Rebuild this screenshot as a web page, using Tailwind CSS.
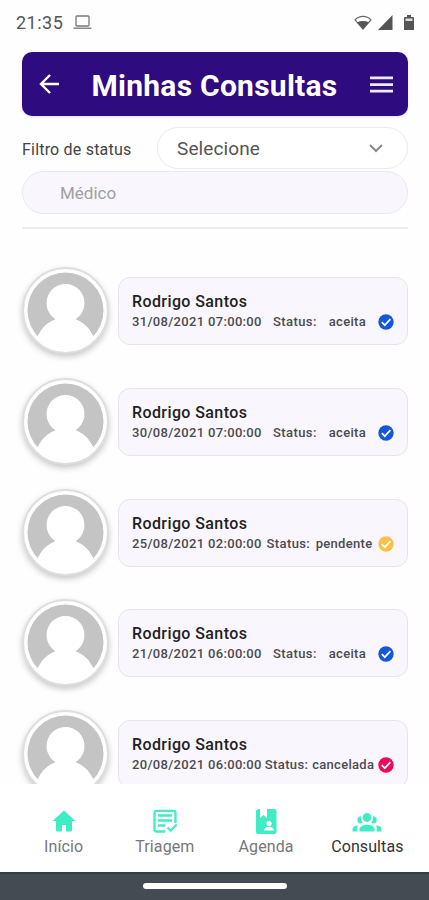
<!DOCTYPE html>
<html lang="pt-br">
<head>
  <meta charset="UTF-8" />
  <meta name="viewport" content="width=device-width, initial-scale=1.0" />
  <title>Minhas Consultas</title>
  <script src="https://cdn.jsdelivr.net/npm/@tailwindcss/browser@4"></script>
</head>
<body class="bg-white font-[Roboto,sans-serif]">
  <div class="w-[429px] h-[900px] flex flex-col overflow-hidden bg-[#fefefe]">

    <!-- Barra de status do sistema -->
    <div class="h-[52px] shrink-0 flex items-start justify-between pl-4 pr-[15px] pt-[11px] text-[#555]">
      <div class="flex items-center gap-[10px]">
        <span class="text-[18px] leading-[23px] tracking-[0.5px]">21:35</span>
        <svg class="w-[19px] h-[15px]" viewBox="0 0 19 15" fill="none" stroke="#777" stroke-width="1.3">
          <rect x="3" y="1" width="13" height="10" rx="1" />
          <path d="M0.5 13.2h18" />
        </svg>
      </div>
      <div class="flex items-center h-[22px] gap-[6px]">
        <svg class="w-[18px] h-[15px]" viewBox="0 0 18 15">
          <path d="M1 4.800C5.500 .2 12.500 .2 17 4.800L9 14z" fill="none" stroke="#666" stroke-width="1.200" />
          <path d="M3.200 7.300c3.500-1.600 8.100-1.600 11.600 0L9 14z" fill="#555" />
        </svg>
        <svg class="w-[15px] h-[15px]" viewBox="0 0 15 15" fill="#555"><path d="M0 15L14.500 0v15z" /></svg>
        <svg class="w-[10px] h-[15px] ml-[5px]" viewBox="0 0 10 15" fill="#555">
          <path d="M3 0h4v2h2a1 1 0 0 1 1 1v12H0V3a1 1 0 0 1 1-1h2z" />
          <path d="M1.500 3.500h7V6h-7z" fill="#ddd" />
        </svg>
      </div>
    </div>

    <!-- Cabeçalho -->
    <header class="ml-[22px] mr-[21px] h-[64px] shrink-0 rounded-[10px] bg-[#2f0b80] shadow-sm flex items-center justify-between pl-[17px] pr-[15px]">
      <svg class="w-5 h-5" viewBox="0 0 20 20" fill="none" stroke="white" stroke-width="2.400"><path d="M20 10H2M11 1L2 10l9 9" /></svg>
      <h1 class="text-white font-bold text-[30px] leading-[36px] tracking-[0.25px] whitespace-nowrap pt-[3px]">Minhas Consultas</h1>
      <svg class="w-[23px] h-[17px]" viewBox="0 0 23 17" fill="#efeaff"><path d="M0 .5h23v2.800H0zM0 7.200h23V10H0zM0 13.800h23v2.800H0z" /></svg>
    </header>

    <!-- Filtros -->
    <div class="ml-[22px] mr-[21px] mt-[11px] shrink-0">
      <div class="flex items-center justify-between">
        <label class="text-[16px] text-[#444] tracking-[0.2px] pt-[3px] whitespace-nowrap">Filtro de status</label>
        <div class="w-[251px] h-[42px] rounded-full border border-[#ebebeb] bg-white flex items-center justify-between pl-[19px] pr-6">
          <span class="text-[19px] text-[#555] tracking-[0.1px] pt-[3px]">Selecione</span>
          <svg class="w-[14px] h-[9px]" viewBox="0 0 14 9" fill="none" stroke="#8a8a8a" stroke-width="2"><path d="M1 1l6 6 6-6" /></svg>
        </div>
      </div>
      <div class="mt-[2px] h-[43px] rounded-full border border-[#e9e8ec] bg-[#f9f6fd] flex items-center pl-[37px] pt-[2px] text-[17px] text-[#a09fa3]">Médico</div>
      <div class="mt-[13px] h-[2px] bg-[#ebebeb]"></div>
    </div>

    <!-- Lista de consultas -->
    <main id="lista" class="h-[555px] shrink-0 overflow-hidden pl-[22px] pr-[21px] pt-[38px]"></main>

    <!-- Menu inferior -->
    <nav class="h-[88px] shrink-0 bg-white grid grid-cols-4 pl-[13px] pr-[11px] pt-[24px] text-[16px] leading-5 tracking-[0.1px] text-[#777]">
      <div class="flex flex-col items-center gap-[2px]">
        <svg class="w-7 h-[27px]" viewBox="0 0 28 27" fill="#3fedc5"><path d="M14 2.500L2.500 13H6v9.500q0 1 1 1h5V17h4v6.500h5q1 0 1-1V13h3.500z" /></svg>
        <span>Início</span>
      </div>
      <div class="flex flex-col items-center gap-[2px]">
        <svg class="w-7 h-[27px]" viewBox="0 0 28 27" fill="none" stroke="#3fedc5" stroke-width="2.300">
          <path d="M14 23.500H5.500a2 2 0 0 1-2-2V4.800a2 2 0 0 1 2-2h17a2 2 0 0 1 2 2V15" />
          <path d="M7 7.500h14M7 12.500h14M7 17.500h7" />
          <path d="M16.500 19.500l3.200 3.200 6-6.200" />
        </svg>
        <span>Triagem</span>
      </div>
      <div class="flex flex-col items-center gap-[2px]">
        <svg class="w-7 h-[27px]" viewBox="0 0 28 27">
          <path d="M6.500 1H8v9l3.500-3L15 10V1h7.500a2 2 0 0 1 2 2v21a2 2 0 0 1-2 2H6a2 2 0 0 1-2-2V2.500z" fill="#3fedc5" />
          <circle cx="17" cy="15.500" r="2.600" fill="white" />
          <path d="M12 22.500c0-5 10-5 10 0z" fill="white" />
        </svg>
        <span>Agenda</span>
      </div>
      <div class="flex flex-col items-center gap-[2px] text-[#333]">
        <svg class="w-[30px] h-[27px]" viewBox="0 0 30 27" fill="#3fedc5">
          <circle cx="15" cy="9.500" r="4.400" />
          <path d="M9 8.300a3.400 3.400 0 1 0 0 7.200q1-.3 1.700-1C9.300 13 8.500 10.500 9 8.300zM21 8.300a3.400 3.400 0 1 1 0 7.200q-1-.3-1.700-1C20.700 13 21.500 10.500 21 8.300z" />
          <path d="M7.500 23.500v-2c0-6.500 15-6.500 15 0v2zM.5 23.500v-2c0-2.500 2-4 5.500-4C5 19 5.300 20.500 5.300 23.500zM29.500 23.500v-2c0-2.500-2-4-5.500-4 1 1.500.7 3 .7 6z" />
        </svg>
        <span>Consultas</span>
      </div>
    </nav>

    <div class="h-7 shrink-0 bg-[#444c53] border-t-2 border-[#30423f] flex justify-center pt-[9px]">
      <div class="w-[144px] h-[6px] rounded-full bg-white"></div>
    </div>
  </div>

  <script>
    const consultas = [
      { data: "31/08/2021 07:00:00", status: "aceita" },
      { data: "30/08/2021 07:00:00", status: "aceita" },
      { data: "25/08/2021 02:00:00", status: "pendente" },
      { data: "21/08/2021 06:00:00", status: "aceita" },
      { data: "20/08/2021 06:00:00", status: "cancelada" }
    ];
    const cores = { aceita: "#1557d6", pendente: "#fbc04a", cancelada: "#ea0b5c" };

    document.getElementById("lista").innerHTML = consultas.map(c => `
      <div class="h-[110.75px] flex items-start justify-between">
        <svg class="w-[87px] h-[87px] rounded-full bg-white border-2 border-[#dedede] shadow-[0_3px_6px_rgba(0,0,0,0.22)]" viewBox="2 2 83 83">
          <circle cx="43.500" cy="43.500" r="38" fill="#c4c4c4" />
          <circle cx="43.500" cy="36" r="19" fill="white" />
          <path d="M33 50h21v2.500C61 55 67 60 71.500 69.500L66 84H21l-5.500-14.500C20 60 26 55 33 52.500z" fill="white" />
        </svg>
        <div class="w-[290px] h-[68px] mt-[10px] rounded-[12px] border border-[#e6e4ea] bg-[#f9f6fd] px-[13px] pt-[14px]">
          <div class="text-[16px] leading-5 font-medium text-[#222] tracking-[0.4px]">Rodrigo Santos</div>
          <div class="flex items-center mt-[1px] text-[13px] leading-[18px] font-medium text-[#4b4b4e] whitespace-nowrap">
            <span class="w-[129px] tracking-[0.32px]">${c.data}</span>
            <div class="flex-1 flex justify-evenly">
              <span class="tracking-[0.4px]">Status:</span>
              <span class="tracking-[0.3px]">${c.status}</span>
            </div>
            <svg class="w-4 h-4" viewBox="0 0 16 16">
              <circle cx="8" cy="8" r="7.700" fill="${cores[c.status]}" />
              <path d="M3.800 8.200l3 3 5.600-6" fill="none" stroke="white" stroke-width="1.700" />
            </svg>
          </div>
        </div>
      </div>`).join("");
  </script>
</body>
</html>
